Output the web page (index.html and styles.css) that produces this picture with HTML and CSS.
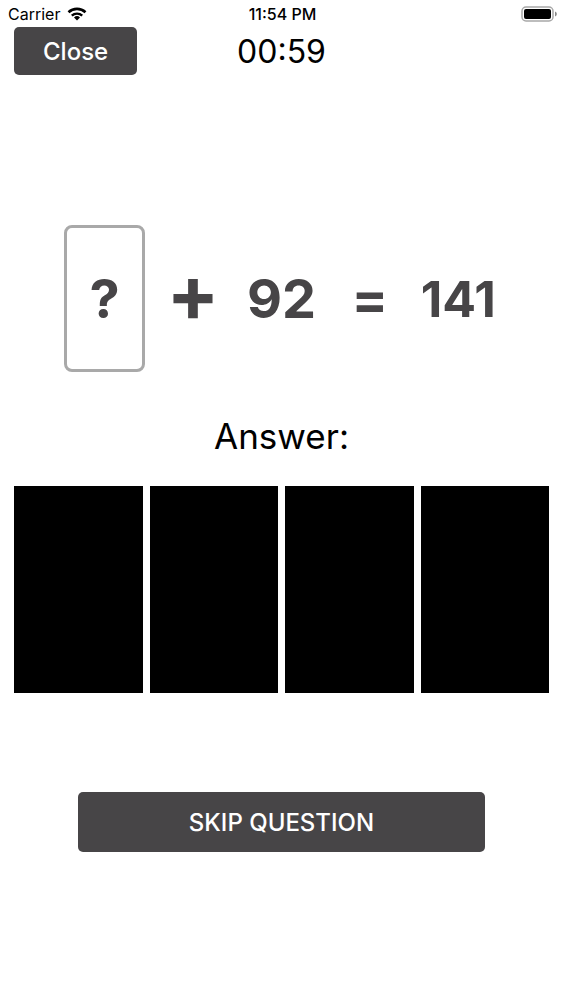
FILE: index.html
```html
<!DOCTYPE html>
<html lang="en">
<head>
  <meta charset="UTF-8">
  <meta name="viewport" content="width=device-width, initial-scale=1.0">
  <title>Math Quiz</title>
  <link rel="stylesheet" href="styles.css">
</head>
<body>
  <div class="status-bar">
    <div class="carrier">
      <span>Carrier</span>
      <svg class="wifi" viewBox="0 0 20 14" aria-hidden="true">
        <path d="M1.5 5.2a12.4 12.4 0 0 1 17 0" fill="none" stroke="#000" stroke-width="2.6"/>
        <path d="M4.8 8.7a7.6 7.6 0 0 1 10.4 0" fill="none" stroke="#000" stroke-width="2.4"/>
        <path d="M10 13.6l-3-3.1a4.3 4.3 0 0 1 6 0z"/>
      </svg>
    </div>
    <div class="clock">11:54 PM</div>
    <svg class="battery" viewBox="0 0 36 16" aria-hidden="true">
      <rect x="1" y="1" width="31" height="14" rx="4" fill="#fff" stroke="#a8a8a8" stroke-width="1.5"/>
      <rect x="3" y="3" width="27" height="10" rx="2"/>
      <path d="M34 5.5a2.6 2.6 0 0 1 0 5z" fill="#888"/>
    </svg>
  </div>

  <header class="top-bar">
    <button type="button" class="button close">Close</button>
    <div class="timer">00:59</div>
  </header>

  <main>
    <div class="equation">
      <div class="unknown">?</div>
      <div class="operator">+</div>
      <div class="number">92</div>
      <div class="equals">=</div>
      <div class="result">141</div>
    </div>

    <h1 class="answer-title">Answer:</h1>
    <div class="answers">
      <button type="button" class="answer" aria-label="Answer 1"></button>
      <button type="button" class="answer" aria-label="Answer 2"></button>
      <button type="button" class="answer" aria-label="Answer 3"></button>
      <button type="button" class="answer" aria-label="Answer 4"></button>
    </div>

    <button type="button" class="button skip">SKIP QUESTION</button>
  </main>
</body>
</html>
```

FILE: styles.css
```css
* {
  box-sizing: border-box;
}
body {
  margin: 0;
  background-color: #fff;
  color: #000;
  font-family: Inter, "Liberation Sans", sans-serif;
}
.status-bar {
  display: grid;
  grid-template-columns: 1fr auto 1fr;
  align-items: center;
  height: 27px;
  padding: 0 6px 0 8px;
  font-size: 16px;
}
.carrier {
  display: flex;
  align-items: center;
  gap: 7px;
}
.wifi {
  width: 20px;
  height: 14px;
}
.clock {
  font-weight: 500;
}
.battery {
  width: 36px;
  height: 16px;
  justify-self: end;
}
.top-bar {
  display: grid;
  grid-template-columns: 1fr auto 1fr;
  align-items: center;
  padding: 0 14px;
}
.button {
  border: 0;
  border-radius: 5px;
  background-color: #474547;
  color: #fff;
  font-family: inherit;
  font-size: 24px;
  font-weight: 500;
}
.close {
  justify-self: start;
  height: 48px;
  padding: 0 29px;
}
.timer {
  font-size: 32px;
}
.equation {
  display: grid;
  grid-template-columns: repeat(5, minmax(0, 1fr));
  gap: 7px;
  align-items: center;
  margin: 150px 64px 0;
  color: #474547;
  font-size: 54px;
  font-weight: 700;
  text-align: center;
}
.unknown {
  display: flex;
  align-items: center;
  justify-content: center;
  height: 147px;
  border: 3px solid #a9a9a9;
  border-radius: 8px;
}
.operator {
  font-size: 78px;
  font-feature-settings: "case";
}
.result {
  font-size: 50px;
}
.answer-title {
  margin: 42px 0 28px;
  font-size: 35px;
  font-weight: 400;
  line-height: 44px;
  text-align: center;
}
.answers {
  display: grid;
  grid-template-columns: repeat(4, 1fr);
  gap: 7px;
  padding: 0 14px;
}
.answer {
  height: 207px;
  padding: 0;
  border: 0;
  background-color: #000;
}
.skip {
  display: block;
  width: calc(100% - 156px);
  height: 60px;
  margin: 99px auto 0;
}
```
